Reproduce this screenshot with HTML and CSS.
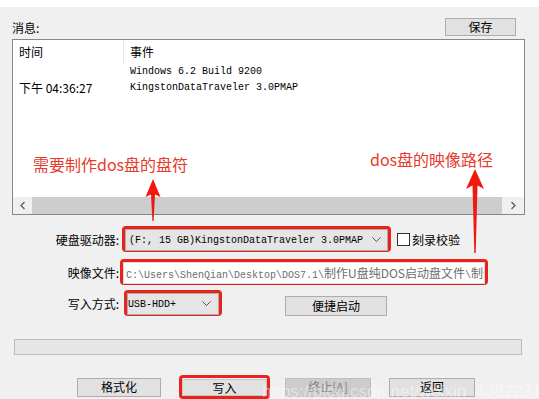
FILE: index.html
```html
<!DOCTYPE html>
<html>
  <head>
    <meta charset="utf-8" />
    <title>写入硬盘映像</title>
    <link rel="stylesheet" href="styles.css">
  </head>
  <body>
    <div class="topbar"></div>
    <div class="dialog">
      <div class="msg-head">
        <span class="caption">消息:</span>
        <button class="btn btn-save" type="button">保存</button>
      </div>

      <div class="log">
        <div class="log-body">
          <div class="log-row log-header">
            <span class="col-time">时间</span>
            <span class="col-event">事件</span>
          </div>
          <div class="log-row">
            <span class="col-time"></span>
            <span class="col-event mono">Windows 6.2 Build 9200</span>
          </div>
          <div class="log-row">
            <span class="col-time">下午 04:36:27</span>
            <span class="col-event mono">KingstonDataTraveler 3.0PMAP</span>
          </div>
        </div>
        <div class="hscroll">
          <span class="sb-arrow">
            <svg width="8" height="9" viewBox="0 0 8 9"><path d="M5.5 1 L2 4.5 L5.5 8" fill="none" stroke="#606060" stroke-width="1.4"/></svg>
          </span>
          <span class="sb-thumb"></span>
          <span class="sb-arrow">
            <svg width="8" height="9" viewBox="0 0 8 9"><path d="M2.5 1 L6 4.5 L2.5 8" fill="none" stroke="#606060" stroke-width="1.4"/></svg>
          </span>
        </div>
      </div>

      <form class="settings">
        <div class="field">
          <label class="field-label">硬盘驱动器:</label>
          <div class="mark mark-drive">
            <div class="combo mono">
              <span>(F:, 15 GB)KingstonDataTraveler 3.0PMAP</span>
              <svg class="chev" width="9" height="6" viewBox="0 0 9 6"><path d="M0.5 0.5 L4.5 4.5 L8.5 0.5" fill="none" stroke="#555" stroke-width="1"/></svg>
            </div>
          </div>
          <label class="check"><span class="check-box"></span>刻录校验</label>
        </div>

        <div class="field field-image">
          <label class="field-label">映像文件:</label>
          <div class="mark mark-path">
            <div class="path-input mono">C:\Users\ShenQian\Desktop\DOS7.1\<span class="cjk">制作U盘纯DOS启动盘文件</span>\<span class="cjk">制作</span></div>
          </div>
        </div>

        <div class="field field-mode">
          <label class="field-label">写入方式:</label>
          <div class="mark mark-mode">
            <div class="combo mono">
              <span>USB-HDD+</span>
              <svg class="chev" width="9" height="6" viewBox="0 0 9 6"><path d="M0.5 0.5 L4.5 4.5 L8.5 0.5" fill="none" stroke="#555" stroke-width="1"/></svg>
            </div>
          </div>
          <button class="btn btn-quick" type="button">便捷启动</button>
        </div>
      </form>

      <div class="progress"></div>

      <div class="actions">
        <button class="btn btn-action btn-format" type="button">格式化</button>
        <div class="mark mark-write">
          <button class="btn btn-write" type="button">写入</button>
        </div>
        <button class="btn btn-action btn-stop" type="button" disabled>终止[A]</button>
        <button class="btn btn-action btn-back" type="button">返回</button>
      </div>
    </div>

    <!-- annotations drawn over the screenshot -->
    <div class="note note-drive">需要制作dos盘的盘符</div>
    <div class="note note-path">dos盘的映像路径</div>
    <svg class="arrows" width="539" height="399" viewBox="0 0 539 399">
      <polygon points="153,179 160.5,197 155,194.5 153.6,221 152.4,221 151,194.5 145.5,197" fill="#f0190f"/>
      <polygon points="475,169 484,189 477.5,185.5 475.7,253 474.3,253 472.5,185.5 466,189" fill="#f0190f"/>
    </svg>
    <div class="watermark">https://blog.csdn.net/weixin_43822311</div>
  </body>
</html>
```

FILE: styles.css
```css
body {
  margin: 0;
  width: 539px;
  height: 399px;
  overflow: hidden;
  position: relative;
  background-color: #f0f0f0;
  font-family: "Noto Sans CJK SC", "Liberation Sans", sans-serif;
  font-size: 12px;
  color: #000;
}
.topbar {
  height: 7px;
  background-color: #fff;
}
.dialog {
  padding-left: 12px;
}
.mono {
  font-family: "Liberation Mono", "Noto Sans CJK SC", monospace;
  font-size: 10px;
}
.mono .cjk {
  font-family: "Noto Sans CJK SC", sans-serif;
  font-size: 12px;
}

/* buttons */
.btn {
  font-family: "Noto Sans CJK SC", sans-serif;
  font-size: 12px;
  color: #000;
  background-color: #e1e1e1;
  border: 1px solid #adadad;
  padding: 0;
  margin: 0;
  line-height: 16px;
}
.btn[disabled] {
  background-color: #cccccc;
  border-color: #bfbfbf;
  color: #838383;
}

/* message header + log */
.msg-head {
  display: flex;
  justify-content: space-between;
  align-items: flex-end;
  width: 504px;
  padding-top: 11px;
}
.caption {
  line-height: 16px;
}
.btn-save {
  width: 71px;
  height: 18px;
}
.log {
  margin-top: 3px;
  width: 511px;
  height: 174px;
  border: 1px solid #828790;
  background-color: #fff;
  display: flex;
  flex-direction: column;
}
.log-body {
  flex: 1;
}
.log-row {
  display: flex;
  height: 16px;
  line-height: 16px;
}
.log-header {
  height: 24px;
  line-height: 24px;
}
.col-time {
  width: 104px;
  padding-left: 6px;
  white-space: nowrap;
}
.log-header .col-time {
  border-right: 1px solid #e5e5e5;
}
.col-event {
  padding-left: 7px;
  white-space: nowrap;
}
.log-header .col-event {
  padding-left: 6px;
}
.hscroll {
  height: 17px;
  display: flex;
  background-color: #f0f0f0;
}
.sb-arrow {
  width: 19px;
  display: flex;
  align-items: center;
  justify-content: center;
}
.sb-arrow:last-child {
  width: 22px;
}
.sb-thumb {
  flex: 1;
  background-color: #cdcdcd;
}

/* settings */
.settings {
  margin: 11px 0 0;
}
.field {
  display: flex;
  align-items: center;
  height: 26px;
}
.field-image {
  margin-top: 7px;
}
.field-mode {
  margin-top: 5px;
}
.field-label {
  width: 107px;
  text-align: right;
  margin-right: 3px;
  white-space: nowrap;
}
.mark {
  border: 3px solid #e8231c;
  border-radius: 4px;
  box-sizing: border-box;
  height: 26px;
}
.mark-drive {
  width: 269px;
}
.mark-path {
  width: 368px;
  margin-left: -2px;
}
.mark-mode {
  width: 98px;
  margin-left: 2px;
}
.combo {
  height: 20px;
  display: flex;
  align-items: center;
  justify-content: space-between;
  padding: 0 6px 0 3px;
  background-color: #e5e5e5;
  border: 1px solid #acacac;
  white-space: nowrap;
}
.mark-mode .combo {
  padding-left: 0;
  padding-right: 7px;
}
.path-input {
  height: 20px;
  line-height: 20px;
  padding-left: 2px;
  background-color: #fff;
  border: 1px solid #d9d9d9;
  color: #6d6d6d;
  white-space: nowrap;
  overflow: hidden;
}
.check {
  display: flex;
  align-items: center;
  margin-left: 6px;
}
.check-box {
  width: 11px;
  height: 11px;
  border: 1px solid #333;
  background-color: #fff;
  margin-right: 2px;
}
.btn-quick {
  width: 102px;
  height: 20px;
  margin-left: 63px;
  align-self: flex-end;
}

/* progress + actions */
.progress {
  margin: 23px 0 0 2px;
  width: 506px;
  height: 14px;
  background-color: #e6e6e6;
  border: 1px solid #bcbcbc;
}
.actions {
  display: flex;
  align-items: center;
  margin-top: 20px;
  padding-left: 65px;
}
.btn-action {
  height: 19px;
}
.btn-format {
  width: 84px;
}
.mark-write {
  width: 91px;
  height: 24px;
  margin-left: 18px;
  display: flex;
  align-items: center;
  justify-content: center;
}
.btn-write {
  width: 86px;
  height: 17px;
  border-color: #c8c8c8;
}
.btn-stop {
  width: 86px;
  margin-left: 15px;
}
.btn-back {
  width: 86px;
  margin-left: 18px;
}

/* overlays */
.note {
  position: absolute;
  color: #e8392c;
  font-family: "Noto Sans CJK SC", sans-serif;
  font-size: 16px;
  line-height: 20px;
  white-space: nowrap;
}
.note-drive {
  left: 33px;
  top: 154px;
}
.note-path {
  left: 370px;
  top: 149px;
}
.arrows {
  position: absolute;
  left: 0;
  top: 0;
  pointer-events: none;
}
.watermark {
  position: absolute;
  left: 262px;
  top: 382px;
  font-family: "Liberation Sans", sans-serif;
  font-size: 17px;
  color: rgba(255, 255, 255, 0.45);
  white-space: nowrap;
}
```
